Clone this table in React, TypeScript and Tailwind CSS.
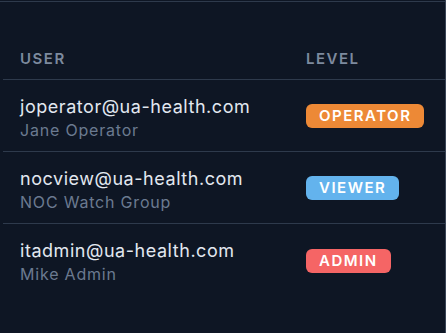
import React from 'react';

type Row = { email: string; name: string; level: string; badge: string };

const rows: Row[] = [
  { email: 'joperator@ua-health.com', name: 'Jane Operator', level: 'OPERATOR', badge: 'bg-[#ed8936]' },
  { email: 'nocview@ua-health.com', name: 'NOC Watch Group', level: 'VIEWER', badge: 'bg-[#63b3ed]' },
  { email: 'itadmin@ua-health.com', name: 'Mike Admin', level: 'ADMIN', badge: 'bg-[#f56565]' },
];

const App: React.FC = () => {
  return (
    <div className="w-[446px] h-[333px] overflow-hidden bg-[#0e1624] border-r border-[#3a4556] font-['Inter',sans-serif]">
      <div className="mt-px border-t border-[#2e3a4c]" />
      {/* Header */}
      <div className="ml-[3px] h-[78px] flex items-end pb-[9px] border-b border-[#2e3a4c] text-[15px] font-semibold tracking-[0.1em] text-[#7d8a9e]">
        <div className="w-[303px] pl-[17px]">USER</div>
        <div>LEVEL</div>
      </div>
      {/* Rows */}
      {rows.map((r, i) => (
        <div
          key={r.email}
          className={`ml-[3px] h-[72px] flex items-center ${i < rows.length - 1 ? 'border-b border-[#2e3a4c]' : ''}`}
        >
          <div className="w-[303px] pl-[17px] pt-1">
            <div className="text-[18px] leading-[22px] tracking-[0.03em] text-[#e2e8f0]">{r.email}</div>
            <div className="mt-0.5 text-[16px] leading-[20px] tracking-[0.05em] text-[#6b7a90]">{r.name}</div>
          </div>
          <div>
            <span className={`inline-block h-6 leading-6 px-[13px] rounded-md text-[15px] font-semibold tracking-[0.1em] text-white ${r.badge}`}>
              {r.level}
            </span>
          </div>
        </div>
      ))}
    </div>
  );
};

export default App;
